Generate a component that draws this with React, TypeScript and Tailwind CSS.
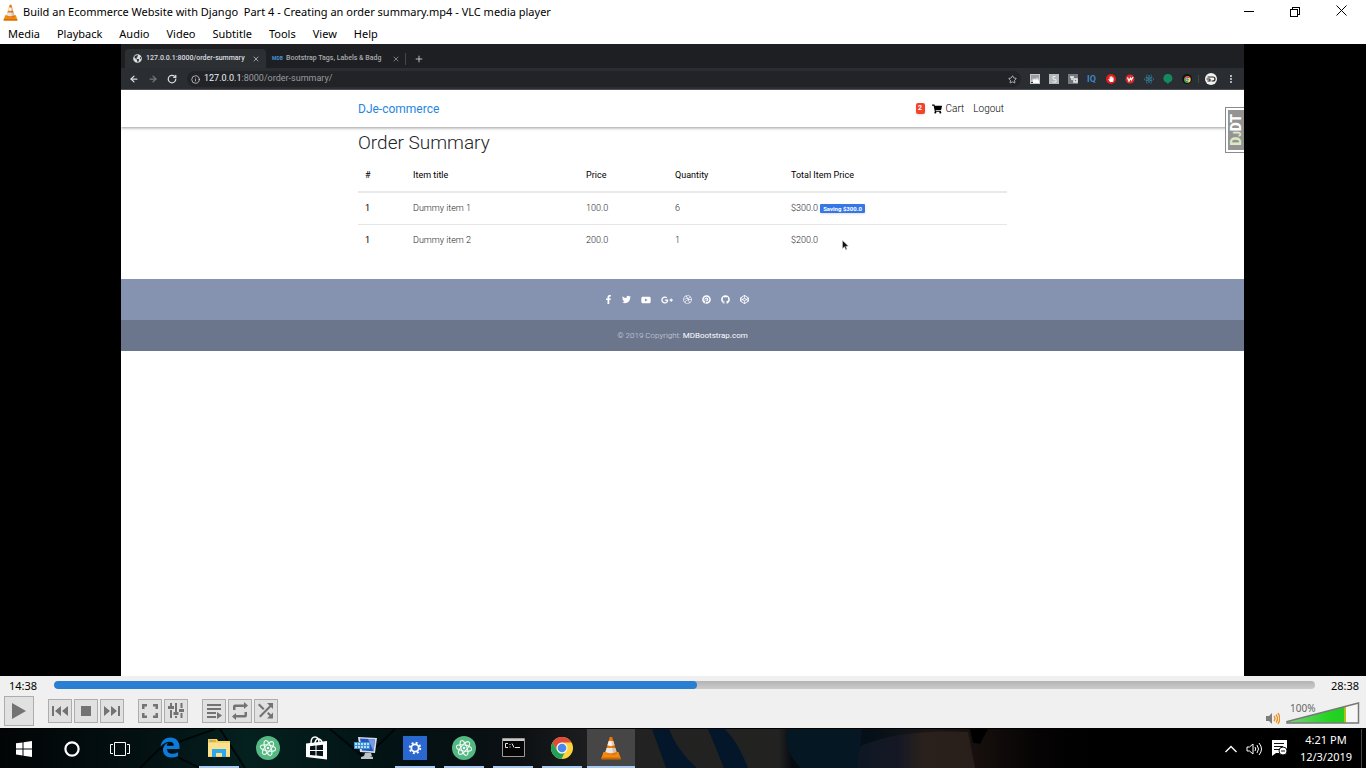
import React from "react";
import { FaFacebookF, FaTwitter, FaYoutube, FaGooglePlusG, FaDribbble, FaPinterest, FaGithub, FaCodepen, FaShoppingCart, FaGlobeAmericas, FaHandPaper, FaReact } from "react-icons/fa";
import { ArrowLeft, ArrowRight, RotateCw, Info, Star, Plus, X, MoreVertical } from "lucide-react";

const menus = ["Media", "Playback", "Audio", "Video", "Subtitle", "Tools", "View", "Help"];

const items = [
  { id: 1, title: "Dummy item 1", price: "100.0", quantity: 6, total: "$300.0", saving: "Saving $300.0" },
  { id: 2, title: "Dummy item 2", price: "200.0", quantity: 1, total: "$200.0", saving: "" },
];

const socials = [
  { name: "Facebook", icon: FaFacebookF, size: 9, box: "w-[8px]" },
  { name: "Twitter", icon: FaTwitter, size: 9, box: "w-[9px]" },
  { name: "YouTube", icon: FaYoutube, size: 10, box: "w-[10px]" },
  { name: "Google Plus", icon: FaGooglePlusG, size: 12, box: "w-[12px]" },
  { name: "Dribbble", icon: FaDribbble, size: 9, box: "w-[9px]" },
  { name: "Pinterest", icon: FaPinterest, size: 9, box: "w-[9px]" },
  { name: "GitHub", icon: FaGithub, size: 9, box: "w-[9px]" },
  { name: "Codepen", icon: FaCodepen, size: 9, box: "w-[9px]" },
];

function Cone({ size }: { size: number }) {
  return (
    <svg width={size} height={size} viewBox="0 0 24 24" aria-hidden="true">
      <path d="M4.500 16h15l2.200 6.200q.3 1-.8 1H3.100q-1.100 0-.8-1z" fill="#f08a12" />
      <path d="M2.500 21.500h19l.4 1.700H2.100z" fill="#cf6500" />
      <path d="M10.800 1h2.400L18 17.500q-6 3-12 0z" fill="#f47b0b" />
      <path d="M9.700 5h4.600l1.300 4.300q-3.600 1.400-7.200 0z" fill="#f3f3f1" />
      <path d="M7.600 12h8.800l1.200 4q-5.600 2.400-11.200 0z" fill="#e5e7e6" />
      <path d="M12 1h1.200L18 17.500q-2 1.300-4 1.400z" fill="#a94600" opacity=".22" />
    </svg>
  );
}

function TitleBar() {
  return (
    <header className="flex h-6 shrink-0 items-center bg-white pr-[2px] pl-[2px] text-[11px] text-black">
      <Cone size={17} />
      <h1 className="ml-1 grow whitespace-pre">Build an Ecommerce Website with Django  Part 4 - Creating an order summary.mp4 - VLC media player</h1>
      <button aria-label="Minimize" className="flex h-5 w-[46px] items-center justify-center">
        <svg width="11" height="11" stroke="#000" shapeRendering="crispEdges"><path d="M0 4.500h10" /></svg>
      </button>
      <button aria-label="Restore" className="flex h-5 w-[46px] items-center justify-center">
        <svg width="11" height="11" fill="none" stroke="#000" shapeRendering="crispEdges"><path d="M.5 2.500h7v7h-7zM2.500 2V.5h7v7H8" /></svg>
      </button>
      <button aria-label="Close" className="flex h-5 w-[46px] items-center justify-center pb-1">
        <svg width="11" height="11" stroke="#000"><path d="M.5.5l10 10M10.500.5l-10 10" /></svg>
      </button>
    </header>
  );
}

function MenuBar() {
  return (
    <nav aria-label="Main menu" className="flex h-5 shrink-0 items-center gap-[17px] bg-white pl-2 text-[11px] text-black">
      {menus.map((m) => (
        <button key={m}>{m}</button>
      ))}
    </nav>
  );
}

function BrowserChrome() {
  return (
    <div className="text-[#dadce0]">
      <div className="flex h-6 items-end bg-[#1d1f22] pl-1 text-[7px] font-medium">
        <div className="flex h-[19px] w-[141px] items-center rounded-t bg-[#2d3033] pr-[6px] pl-2">
          <FaGlobeAmericas size={9} className="mr-1 shrink-0" />
          <span className="grow whitespace-nowrap">127.0.0.1:8000/order-summary</span>
          <button aria-label="Close tab"><X size={8} /></button>
        </div>
        <div className="flex h-[19px] w-[139px] items-center pr-[5px] pl-[6px] text-[#a9abae]">
          <span className="w-[14px] text-[5px] font-bold text-[#4b8fd4]" aria-hidden="true">MDB</span>
          <span className="grow whitespace-nowrap">Bootstrap Tags, Labels &amp; Badg</span>
          <button aria-label="Close tab"><X size={8} /></button>
        </div>
        <div className="flex h-[19px] items-center">
          <span className="h-3 w-px bg-[#45484b]" />
          <button aria-label="New tab" className="ml-2"><Plus size={10} /></button>
        </div>
      </div>
      <div className="flex h-[22px] items-center border-b border-[#55575a] bg-[#2a2d31] px-2 pt-px text-[9px]">
        <button aria-label="Back"><ArrowLeft size={10} strokeWidth={3} /></button>
        <button aria-label="Forward" className="ml-[9px] text-[#77797c]"><ArrowRight size={10} strokeWidth={3} /></button>
        <button aria-label="Reload" className="ml-[9px]"><RotateCw size={10} strokeWidth={3} /></button>
        <div className="ml-[10px] flex h-4 grow items-center rounded-full bg-[#212327] px-1">
          <Info size={9} />
          <span className="ml-1 text-[#9a9ca0]"><span className="text-[#eeeff0]">127.0.0.1</span>:8000/order-summary/</span>
          <button aria-label="Bookmark" className="ml-auto"><Star size={9} /></button>
        </div>
        <div className="ml-[9px] flex items-center gap-[9px]">
          <svg width="10" height="10"><path d="M0 0h10v10H0z" fill="#c6c8ca" /><path d="M1 1h8v4L7 3 5 5 3 4 1 7z" fill="#9b9da0" /><path d="M3 9V6l2-1 1 1 1-1 2 2v2z" fill="#fff" /><path d="M1 8h2v1H1z" fill="#333" /></svg>
          <svg width="10" height="10"><path d="M0 0h10v10H0z" fill="#b5b7b9" /><path d="M6.500 2.500H4v2.500l3 .5v2.500H3.500" fill="none" stroke="#eee" /></svg>
          <svg width="10" height="10"><path d="M0 0h10v10H0z" fill="#777a7d" /><path d="M2 3h4M4 3v3M6 5h3v3H6z" fill="none" stroke="#eee" strokeWidth="1.500" /></svg>
          <span className="w-[10px] text-[9px] leading-none font-bold text-[#3f87c5]">IQ</span>
          <span className="flex size-[10px] items-center justify-center rounded-full bg-[#df1f1a]"><FaHandPaper size={6} color="#fff" /></span>
          <svg width="10" height="10"><circle cx="5" cy="5" r="4.500" fill="#d92b2b" /><path d="M2.500 3.500L4 7l1.500-3L6.500 6 8 3" fill="none" stroke="#fff" strokeWidth="1.200" /></svg>
          <FaReact size={10} color="#2f93b5" />
          <svg width="10" height="10"><path d="M5 0a4.300 4.300 0 0 1 1 8.500L5 10 3.500 8.400A4.300 4.300 0 0 1 5 0z" fill="#128a5d" /></svg>
          <span className="flex size-[10px] items-center justify-center rounded-full bg-[#111314]"><Chrome size={7} /></span>
          <span className="-mx-[3px] h-2 w-px bg-[#34513d]" />
          <svg width="12" height="12" viewBox="0 0 12 12"><circle cx="6" cy="6" r="6" fill="#f2f2f2" /><path d="M2.500 4H8q2 0 2 2T8 8H6.500M1.500 6H5M2.500 8H5V6" fill="none" stroke="#222" strokeWidth="1.200" /></svg>
          <button aria-label="Browser menu"><MoreVertical size={10} strokeWidth={3} /></button>
        </div>
      </div>
    </div>
  );
}

function Chrome({ size }: { size: number }) {
  return (
    <svg width={size} height={size} viewBox="0 0 24 24" aria-hidden="true">
      <circle cx="12" cy="12" r="11" fill="#fdd23b" />
      <path d="M12 1a11 11 0 0 1 9.530 5.500H12A5.500 5.500 0 0 0 7.240 14.750L2.470 6.500A11 11 0 0 1 12 1z" fill="#e04a3c" />
      <path d="M2.470 6.500L7.240 14.750A5.500 5.500 0 0 0 12 17.500l2.500-.6L11.500 23A11 11 0 0 1 2.470 6.500z" fill="#1fa158" />
      <circle cx="12" cy="12" r="5.500" fill="#f4f4f4" />
      <circle cx="12" cy="12" r="4.300" fill="#4a88ee" />
    </svg>
  );
}

function ShopPage() {
  return (
    <div className="relative grow bg-white font-[Roboto,sans-serif] text-[#212529]">
      <div className="relative h-[37px] shadow-[0_1px_3px_rgba(0,0,0,0.4)]">
        <nav aria-label="Shop" className="mx-auto flex h-full max-w-[649px] items-center text-[10px]">
          <a href="#home" className="text-[12px] text-[#1f86df]">DJe-commerce</a>
          <a href="#cart" className="ml-auto flex items-center font-light text-black">
            <span className="mr-[7px] flex h-[11px] w-[9px] items-center justify-center rounded-[2px] bg-[#f4432d] text-[7px] font-bold text-white shadow">2</span>
            <FaShoppingCart size={10} color="#000" className="mr-1" />
            Cart
          </a>
          <a href="#logout" className="mr-[3px] ml-[9px] font-light text-black">Logout</a>
        </nav>
      </div>
      <button aria-label="Debug toolbar" className="absolute top-[17px] right-0 flex h-[46px] w-[19px] border border-r-0 border-[#8b8b8b] bg-white py-[2px] pl-[2px]">
        <span className="flex h-full grow items-center justify-center bg-[#949494] text-[14px] leading-none font-black text-white [writing-mode:sideways-lr]"><span className="text-[#dce9c3]">D<span className="text-[10px]">J</span></span>DT</span>
      </button>
      <main className="mx-auto max-w-[649px] pb-[23px]">
        <h2 className="h-8 text-[19px] leading-8 font-light">Order Summary</h2>
        <table className="w-full table-fixed border-collapse text-left text-[9px] leading-4">
          <colgroup>
            <col className="w-[48px]" />
            <col className="w-[173px]" />
            <col className="w-[89px]" />
            <col className="w-[116px]" />
            <col />
          </colgroup>
          <thead>
            <tr className="h-[33px] border-b-2 border-[#e9e9ea]">
              {["#", "Item title", "Price", "Quantity", "Total Item Price"].map((h) => (
                <th key={h} scope="col" className="px-[7px] font-normal text-black">{h}</th>
              ))}
            </tr>
          </thead>
          <tbody>
            {items.map((it) => (
              <tr key={it.id} className="h-8 border-b border-[#e6e6e7] font-light last:border-0">
                <th scope="row" className="px-[7px] font-normal text-black">1</th>
                <td className="px-[7px]">{it.title}</td>
                <td className="px-[7px]">{it.price}</td>
                <td className="px-[7px]">{it.quantity}</td>
                <td className="px-[7px]">
                  {it.total}
                  {it.saving && <span className="ml-[2px] inline-block rounded-[1px] bg-[#3577e5] px-[3px] text-[6px] leading-[9px] font-bold text-white shadow">{it.saving}</span>}
                </td>
              </tr>
            ))}
          </tbody>
        </table>
      </main>
      <svg className="absolute top-[150px] left-[721px]" width="7" height="11" viewBox="0 0 7 11" aria-hidden="true">
        <path d="M.5.5v8l2-1.700 1.300 3 1.200-.6-1.300-2.800 2.600-.4z" fill="#111" stroke="#ccc" strokeWidth=".5" />
      </svg>
      <footer className="text-center text-[8px] font-light">
        <div className="flex h-[41px] items-center justify-center gap-[10px] bg-[#8593b0] pr-[12px] text-white">
          {socials.map(({ name, icon: Icon, size, box }) => (
            <a key={name} href="#social" aria-label={name} className={`flex justify-center ${box}`}><Icon size={size} className="shrink-0" /></a>
          ))}
        </div>
        <p className="h-[31px] bg-[#6b768d] leading-[31px] text-[#d5d9e1]">
          © 2019 Copyright: <a href="#mdb" className="font-normal text-white">MDBootstrap.com</a>
        </p>
      </footer>
    </div>
  );
}

const groups = [
  {
    name: "Track",
    buttons: [
      { name: "Previous", d: "M4 7h2v10H4zM13 7v10l-6-5zM20 7v10l-6-5z" },
      { name: "Stop", d: "M7 7h10v10H7z" },
      { name: "Next", d: "M18 7h2v10h-2zM4 7v10l6-5zM11 7v10l6-5z" },
    ],
  },
  {
    name: "View",
    buttons: [
      { name: "Fullscreen", d: "M4 5h5v2.500H6.500V10H4zM15 5h5v5h-2.500V7.500H15zM4 14h2.500v2.500H9V19H4zM17.500 14H20v5h-5v-2.500h2.500z" },
      { name: "Extended settings", d: "M6 4h2v3H6zM4 7h6v3H4zM6 11h2v8H6zM11 4h2v9h-2zM9.500 13h5v3h-5zM11 17h2v2h-2zM16.500 4h2v5h-2zM15 10h5v3h-5zM16.500 14h2v5h-2z" },
    ],
  },
  {
    name: "Playlist mode",
    buttons: [
      { name: "Playlist", d: "M5 5h14v2H5zM5 9h14v2H5zM5 13h9v2H5zM5 17h9v2H5zM15 13l5 3.500-5 3.500z" },
      { name: "Loop", d: "M5 11V7.500Q5 5.500 7 5.500h9V3l4 3.500-4 3.500V8H7.500v3zM19 13v3.500q0 2-2 2H8V21l-4-3.500L8 14v2h8.500v-3z" },
      { name: "Random", d: "M4 6l1.500-1.500 5 5L9 11zM19 4v6l-2-2L6.500 18.500 5 17 15.500 6.500 13 4zM13 14.500l1.500-1.500 2.500 2.500 2-2v6h-6l2.500-2.500z" },
    ],
  },
];

function Controls() {
  return (
    <section aria-label="Player controls" className="h-[52px] shrink-0 bg-[#f0f0f0] text-black">
      <div className="flex h-5 items-center text-[11px]">
        <span className="w-[54px] pl-[9px]">14:38</span>
        <div role="progressbar" aria-label="Position" aria-valuenow={51} className="-mt-[2px] h-2 grow overflow-hidden rounded bg-linear-to-b from-[#b4b4b4] to-[#cbcbcb]">
          <div className="h-full w-[51%] rounded bg-[#2a7fd3]" />
        </div>
        <span className="w-[51px] pr-[7px] text-right">28:38</span>
      </div>
      <div className="flex h-8 items-start pl-1">
        <button aria-label="Play" className="flex size-[30px] items-center justify-center border border-[#adadad] bg-[#e1e1e1]">
          <svg width="16" height="18" fill="#737373"><path d="M1 1l14 8-14 8z" /></svg>
        </button>
        {groups.map((g) => (
          <div key={g.name} role="group" aria-label={g.name} className="ml-[14px] flex gap-[2px] pt-[3px]">
            {g.buttons.map((b) => (
              <button key={b.name} aria-label={b.name} className="flex size-6 items-center justify-center border border-[#adadad] bg-[#e1e1e1]">
                <svg width="22" height="22" viewBox="1 1 22 22" fill="#737373" className="shrink-0"><path d={b.d} /></svg>
              </button>
            ))}
          </div>
        ))}
        <div className="ml-auto flex pr-[6px]">
          <button aria-label="Mute" className="mt-4 mr-[6px] flex">
            <svg width="15" height="13"><path d="M1 4h3l3-3v11L4 9H1z" fill="#7c7c7c" /><path d="M9 4q2 2.500 0 5M11 2.500q3 4 0 8M13 1q3.500 5.500 0 11" fill="none" stroke="#f08c1c" strokeWidth="1.300" /></svg>
          </button>
          <div className="relative mt-[6px]">
            <svg width="74" height="23" role="img" aria-label="Volume 100%">
              <defs>
                <linearGradient id="vol"><stop offset="0" stopColor="#7fcf80" /><stop offset=".7" stopColor="#25d425" /><stop offset="1" stopColor="#22cc20" /></linearGradient>
              </defs>
              <path d="M1 21V19.500L72.500 1v20z" fill="#f6f6f6" />
              <path d="M1 21V19.500L59 4.500V21z" fill="url(#vol)" />
              <path d="M59 4.500V21" stroke="#b3bf16" strokeWidth="2" />
              <path d="M1 21V19.500L72.500 1v20z" fill="none" stroke="#777" strokeWidth="1.500" />
            </svg>
            <span className="absolute top-0 left-1 text-[10px] leading-3 text-[#666]">100%</span>
          </div>
        </div>
      </div>
    </section>
  );
}

function Atom() {
  return (
    <svg width="24" height="24" viewBox="0 0 24 24">
      <circle cx="12" cy="12" r="12" fill="#54b883" />
      <g fill="none" stroke="#eefaf3" strokeWidth="1">
        <ellipse cx="12" cy="12" rx="3" ry="7.800" transform="rotate(-20 12 12)" />
        <ellipse cx="12" cy="12" rx="3" ry="7.800" transform="rotate(40 12 12)" />
        <ellipse cx="12" cy="12" rx="3" ry="7.800" transform="rotate(100 12 12)" />
      </g>
      <circle cx="12" cy="12" r="1.300" fill="#fff" />
    </svg>
  );
}

const apps = [
  {
    name: "Edge", line: "",
    art: <svg width="20" height="21" viewBox="0 0 20 20"><path d="M.5 9C1.500 3 5.500 0 10.500 0 16 0 19.500 4 19.500 9v2.500H7q.2 4.500 5 4.700 3.500 0 6-1.500v4q-3 1.300-6.500 1.300C6 20 3 16.500 3 12.500q0-5 5-7.500-1.300 1.500-1.200 3.300h7q0-4-4-4Q4.500 4.300.5 9z" fill="#0d7bdc" /></svg>,
  },
  {
    name: "File Explorer", line: "border-[#a9c9f5]",
    art: <svg width="22" height="18"><path d="M0 0h9l1 2h12v16H0z" fill="#f6cf65" /><path d="M0 4h22v13H0z" fill="#fce18c" /><path d="M1 1h7v2H1z" fill="#e9ae28" /><path d="M2 1h3v1H2z" fill="#4fc3ef" /><path d="M4 18v-8h14v8h-4v-4H8v4z" fill="#2ca9ec" /></svg>,
  },
  { name: "Atom", line: "", art: <Atom /> },
  {
    name: "Store", line: "",
    art: <svg width="22" height="24"><path d="M5 7q0-6 4-6t4 6M9 7q1-5 4-4t3 4" fill="none" stroke="#fff" strokeWidth="1.500" /><path d="M0 7.500L21 5v18.500L0 21z" fill="#fff" /><path d="M4 10.300l5.500-.7V14H4zM10.500 9.500l6.500-.8V14h-6.500zM4 15h5.500v4.500L4 19zM10.500 15H17v5.300l-6.500-.7z" fill="#07131a" /></svg>,
  },
  {
    name: "Remote keyboard", line: "",
    art: <svg width="24" height="24"><path d="M4 1l19 1-2 15-15-1z" fill="#d8dde3" /><path d="M6 2.500l15 .7-1.500 12L8 14.500z" fill="#2456c4" /><path d="M14 3l7 .2-1.500 12z" fill="#769ae6" /><path d="M0 6h16v7H0z" fill="#3b94d5" /><path d="M1 8h14M1 11h14" stroke="#edf5fc" strokeWidth="1.500" strokeDasharray="2 1" /><path d="M11 17h6l1 3h-8zM7 21q6-3 12 0v2H7z" fill="#c0c4c9" /></svg>,
  },
  {
    name: "Settings", line: "border-[#a9c9f5]",
    art: <svg width="24" height="24"><path d="M0 0h24v24H0z" fill="#2a68cf" /><circle cx="12" cy="12" r="3.700" fill="none" stroke="#fff" strokeWidth="1.800" /><circle cx="12" cy="12" r="5.300" fill="none" stroke="#fff" strokeWidth="1.800" strokeDasharray="2 2.163" /></svg>,
  },
  { name: "Atom editor", line: "border-[#a9c9f5]", art: <Atom /> },
  {
    name: "Command Prompt", line: "border-[#a9c9f5]",
    art: <svg width="23" height="19"><path d="M.5.5h22v18H.5z" fill="#050505" stroke="#9a9a9a" /><path d="M1 1h21v2H1z" fill="#c9c9c9" /><path d="M6 5.500H3.500v4H6M8 6v1M8 8.500v1M10 5.500l2 4M13 9.500h5" fill="none" stroke="#e8e8e8" /></svg>,
  },
  { name: "Chrome", line: "border-[#a9c9f5]", art: <Chrome size={24} /> },
];

function Taskbar() {
  return (
    <footer className="relative flex h-10 shrink-0 overflow-hidden border-t border-black bg-black text-white">
      <svg className="absolute inset-0 h-full w-full" viewBox="0 0 1366 40" preserveAspectRatio="none" aria-hidden="true">
        <defs>
          <linearGradient id="desk">
            <stop offset="0" stopColor="#020506" /><stop offset=".1" stopColor="#031012" /><stop offset=".18" stopColor="#04201f" />
            <stop offset=".3" stopColor="#031113" /><stop offset=".38" stopColor="#0c1013" /><stop offset=".45" stopColor="#222222" /><stop offset=".57" stopColor="#222221" />
            <stop offset=".58" stopColor="#060b12" /><stop offset=".64" stopColor="#061018" /><stop offset=".68" stopColor="#1b1716" />
            <stop offset=".715" stopColor="#160f0d" /><stop offset=".76" stopColor="#050303" /><stop offset=".8" stopColor="#000" />
          </linearGradient>
          <linearGradient id="denim">
            <stop offset="0" stopColor="#0f1724" /><stop offset=".35" stopColor="#151824" /><stop offset=".55" stopColor="#2a201c" /><stop offset="1" stopColor="#281f1b" />
          </linearGradient>
        </defs>
        <path d="M0 0h1366v40H0z" fill="url(#desk)" />
        <path d="M140 40l20-20L215 0M160 20l40 20M220 0l25 40M330 0l35 30 30-30" stroke="#000" strokeWidth="2" fill="none" opacity=".7" />
        <path d="M652 0h17q8 22 28 40h-31zM708 0h17q14 15 23 40h-24z" fill="#04162a" />
        <path d="M788 0h74l-3 40h-58q-20-20-13-40z" fill="#051722" />
        <path d="M858 40q-2-15 4-23Q900 0 968 3l7 37z" fill="url(#denim)" />
        <path d="M970 0h18l-8 15-7-1z" fill="#000" />
      </svg>
      <div className="relative flex w-full">
        <button aria-label="Start" className="flex w-12 items-center justify-center">
          <svg width="16" height="16" fill="#fff"><path d="M0 2.300l6.500-.9v6H0zM7.500 1.200L16 0v7.400H7.500zM0 8.400h6.500v6.100L0 13.600zM7.500 8.400H16V16l-8.500-1.200z" /></svg>
        </button>
        <button aria-label="Cortana" className="flex w-12 items-center justify-center">
          <svg width="16" height="16" fill="none" stroke="#fff" strokeWidth="2.200"><circle cx="8" cy="8" r="6.600" /></svg>
        </button>
        <button aria-label="Task view" className="flex w-[50px] items-center justify-center pr-[2px]">
          <svg width="20" height="14" fill="none" stroke="#fff"><path d="M4.500.5h11v13h-11zM3 2.500H.5v9H3M17 2.500h2.500v9H17" /></svg>
        </button>
        {apps.map((a) => (
          <button key={a.name} aria-label={a.name} className="flex w-[49px] flex-col items-center pr-[5px] pl-1">
            <span className="flex grow items-center">{a.art}</span>
            <span className={a.line ? `w-10 border-b-2 ${a.line}` : "h-[2px]"} />
          </button>
        ))}
        <button aria-label="VLC media player" className="flex w-12 flex-col items-center border-b-2 border-[#a9c9f5] bg-[#464646] pt-[7px]">
          <Cone size={24} />
        </button>
        <div className="ml-auto flex items-center">
          <button aria-label="Show hidden icons" className="mr-[9px]"><svg width="12" height="8" fill="none" stroke="#fff" strokeWidth="1.400"><path d="M.5 7L6 1.500 11.500 7" /></svg></button>
          <button aria-label="Volume" className="mr-2"><svg width="17" height="14" fill="none" stroke="#fff"><path d="M1 5h2.500L7 2v10L3.500 9H1zM9 5q1.500 2 0 4M11 3q3 4 0 8M13 1q5 6 0 12" /></svg></button>
          <button aria-label="Notifications" className="mr-[10px]"><svg width="17" height="17"><path d="M1 0h15v13H5l-4 3z" fill="#fff" /><path d="M3 3.500h10M3 6.500h9M3 9.500h6" stroke="#111" /><circle cx="12" cy="11" r="4" fill="#fff" stroke="#111" /><path d="M10 11h4" stroke="#111" /></svg></button>
          <div className="mr-[7px] flex h-full w-[56px] flex-col items-center pt-[2px] text-[11px] leading-[17px] whitespace-nowrap">
            <time>4:21 PM</time>
            <time>12/3/2019</time>
          </div>
          <div className="mr-1 h-full border-l border-[#444]" />
        </div>
      </div>
    </footer>
  );
}

export default function App() {
  return (
    <div className="flex min-h-screen flex-col bg-black font-['Noto_Sans',sans-serif]">
      <TitleBar />
      <MenuBar />
      <div className="flex grow flex-col bg-black pr-[122px] pl-[121px] font-[Roboto,sans-serif]">
        <BrowserChrome />
        <ShopPage />
      </div>
      <Controls />
      <Taskbar />
    </div>
  );
}
